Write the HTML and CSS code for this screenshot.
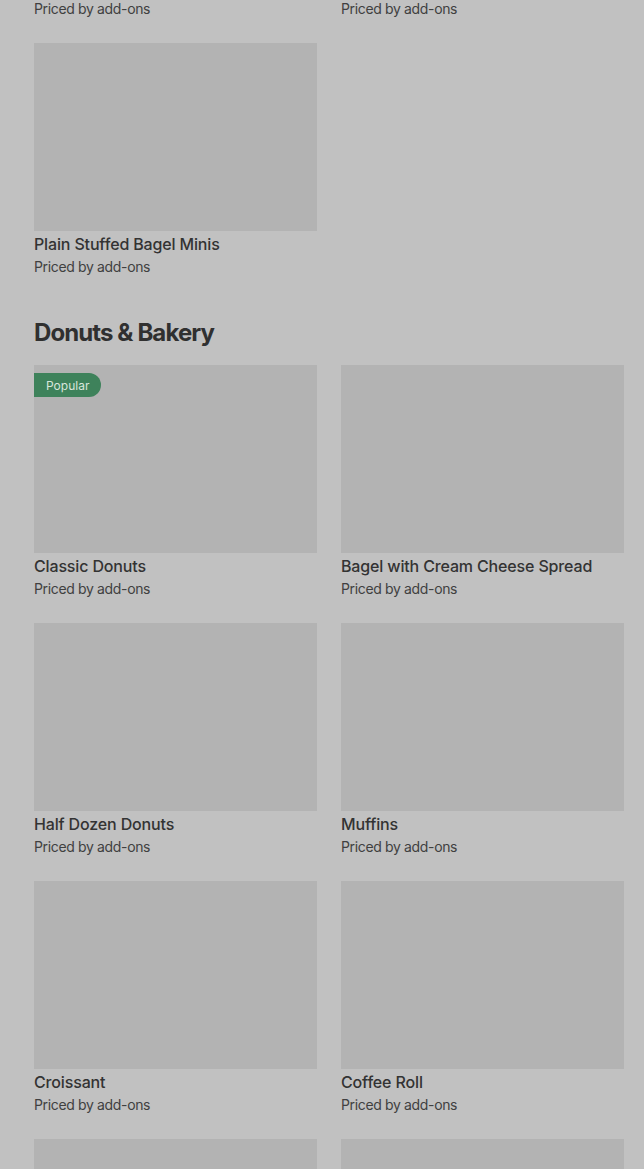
FILE: index.html
```html
<!DOCTYPE html>
<html lang="en">
<head>
  <meta charset="UTF-8" />
  <meta name="viewport" content="width=device-width, initial-scale=1.0"/>
  <title>Menu</title>
  <link rel="stylesheet" href="styles.css">
</head>
<body>

  <div class="page">
    <div class="grid">
      <div class="card">
        <div class="thumb"></div>
        <div class="name">Everything Bagel Minis</div>
        <div class="price">Priced by add-ons</div>
      </div>
      <div class="card">
        <div class="thumb"></div>
        <div class="name">Cinnamon Bagel Minis</div>
        <div class="price">Priced by add-ons</div>
      </div>
      <div class="card">
        <div class="thumb"></div>
        <div class="name">Plain Stuffed Bagel Minis</div>
        <div class="price">Priced by add-ons</div>
      </div>
    </div>

    <h2 class="section-title">Donuts &amp; Bakery</h2>

    <div class="grid">
      <div class="card">
        <div class="thumb">
          <span class="badge">Popular</span>
        </div>
        <div class="name">Classic Donuts</div>
        <div class="price">Priced by add-ons</div>
      </div>
      <div class="card">
        <div class="thumb"></div>
        <div class="name">Bagel with Cream Cheese Spread</div>
        <div class="price">Priced by add-ons</div>
      </div>
      <div class="card">
        <div class="thumb"></div>
        <div class="name">Half Dozen Donuts</div>
        <div class="price">Priced by add-ons</div>
      </div>
      <div class="card">
        <div class="thumb"></div>
        <div class="name">Muffins</div>
        <div class="price">Priced by add-ons</div>
      </div>
      <div class="card">
        <div class="thumb"></div>
        <div class="name">Croissant</div>
        <div class="price">Priced by add-ons</div>
      </div>
      <div class="card">
        <div class="thumb"></div>
        <div class="name">Coffee Roll</div>
        <div class="price">Priced by add-ons</div>
      </div>
      <div class="card">
        <div class="thumb"></div>
        <div class="name">Cinnamon Roll</div>
        <div class="price">Priced by add-ons</div>
      </div>
      <div class="card">
        <div class="thumb"></div>
        <div class="name">Danish</div>
        <div class="price">Priced by add-ons</div>
      </div>
    </div>
  </div>

</body>
</html>
```

FILE: styles.css
```css
html, body {
  margin: 0;
  background-color: #c1c1c1;
  overflow: hidden;
}

body {
  font-family: Inter, 'Noto Sans', sans-serif;
  color: #333333;
}

.page {
  margin-top: -215px;
  padding: 0 20px 0 34px;
}

.grid {
  display: grid;
  grid-template-columns: 283px 283px;
  column-gap: 24px;
  row-gap: 24px;
}

.thumb {
  position: relative;
  height: 188px;
  background-color: #b3b3b3;
}

.name {
  margin-top: 2px;
  font-size: 16px;
  line-height: 22px;
  font-weight: 500;
  color: #333333;
  letter-spacing: -0.15px;
}

.price {
  padding-top: 1px;
  font-size: 14px;
  line-height: 21px;
  color: #404040;
  letter-spacing: -0.35px;
}

.section-title {
  margin: 40px 0 16px;
  font-size: 24px;
  line-height: 32px;
  font-weight: 700;
  color: #303030;
  letter-spacing: -0.9px;
}

.badge {
  position: absolute;
  top: 8px;
  left: 0;
  height: 24px;
  padding: 0 12px;
  display: flex;
  align-items: center;
  background-color: #3e825b;
  color: #d8e6dc;
  font-size: 12px;
  border-radius: 0 12px 12px 0;
}
```
